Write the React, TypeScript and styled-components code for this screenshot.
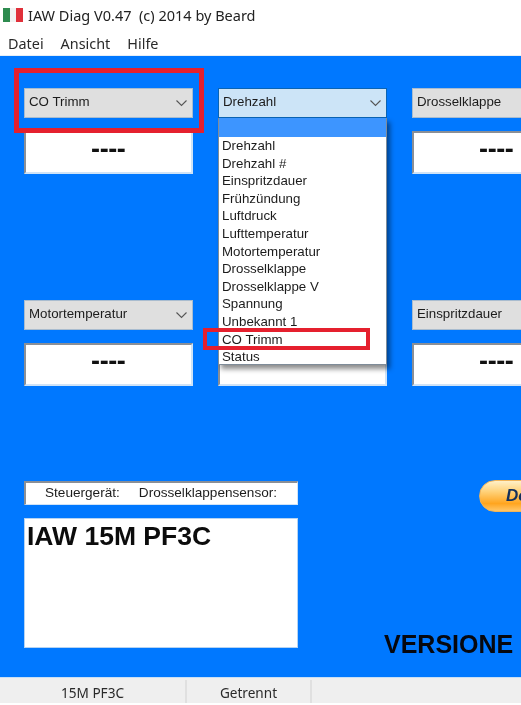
import React from "react";
import styled, { createGlobalStyle } from "styled-components";

const Global = createGlobalStyle`
  html, body { margin: 0; padding: 0; background: #fff; overflow: hidden; }
  * { box-sizing: border-box; }
`;

const Win = styled.div`
  width: 521px;
  height: 705px;
  display: flex;
  flex-direction: column;
  overflow: hidden;
  background: #fff;
  font-family: "Liberation Sans", Arial, sans-serif;
  color: #1c1c1c;
  filter: blur(0.35px);
`;

const TitleBar = styled.div`
  height: 30px;
  display: flex;
  align-items: center;
  gap: 5px;
  padding: 0 0 1px 3px;
  font-family: "Noto Sans", sans-serif;
  font-size: 14.5px;
  color: #222;
  white-space: pre;
`;

const MenuBar = styled.div`
  height: 26px;
  display: flex;
  align-items: center;
  gap: 17px;
  padding: 1px 0 0 8px;
  font-family: "Noto Sans", sans-serif;
  font-size: 14.4px;
  color: #2a2a2a;
  border-bottom: 1px solid #e6eef6;
`;

const Main = styled.div`
  position: relative;
  height: 621px;
  background: #0078ff;
  padding: 32px 0 0 24px;
  overflow: hidden;
`;

const Gauges = styled.div`
  display: grid;
  grid-template-columns: 194px 194px 168px;
  row-gap: 126px;
  width: 600px;
`;

const Gauge = styled.div`
  display: flex;
  flex-direction: column;
  gap: 13px;
  width: 168.5px;
`;

const Combo = styled.div<{ $active?: boolean }>`
  height: 30px;
  display: flex;
  align-items: center;
  justify-content: space-between;
  padding: 0 5px 4px 4px;
  font-size: 13.3px;
  background: ${p => (p.$active ? "#cce4f7" : "#dfdfdf")};
  border: 1px solid ${p => (p.$active ? "#0a64b4" : "#a9bccf")};
  white-space: nowrap;
`;

const Chevron = styled.svg`
  width: 11px;
  height: 7px;
  margin-top: 5px;
  flex: none;
`;

const Display = styled.div`
  height: 43px;
  display: flex;
  align-items: center;
  justify-content: center;
  padding-bottom: 6px;
  background: #fff;
  border-top: 2px solid #8a8f96;
  border-left: 2px solid #8a8f96;
  border-right: 2px solid #cfe3f7;
  border-bottom: 2px solid #cfe3f7;
  font-size: 27px;
  font-weight: 700;
  letter-spacing: -0.4px;
  line-height: 1;
  color: #111;
`;

const Dropdown = styled.div`
  position: absolute;
  left: 218px;
  top: 62px;
  width: 168.5px;
  height: 247px;
  background: #fff;
  border: 1px solid #7f8c99;
  border-top: none;
  box-shadow: 3px 4px 5px rgba(0, 0, 0, 0.45);
  font-size: 13.3px;
`;

const Highlight = styled.div`
  height: 19px;
  background: #3d95ff;
`;

const Item = styled.div`
  height: 17.6px;
  line-height: 17.6px;
  padding-left: 3px;
  white-space: nowrap;
`;

const RedBox = styled.div<{ $l: number; $t: number; $w: number; $h: number; $b: number }>`
  position: absolute;
  left: ${p => p.$l}px;
  top: ${p => p.$t}px;
  width: ${p => p.$w}px;
  height: ${p => p.$h}px;
  border: ${p => p.$b}px solid #e5202e;
`;

const Lower = styled.div`
  display: flex;
  margin-top: 95px;
`;

const LeftCol = styled.div`
  width: 274px;
  display: flex;
  flex-direction: column;
  gap: 13px;
  flex: none;
`;

const InfoBar = styled.div`
  height: 24px;
  display: flex;
  align-items: center;
  gap: 19px;
  padding: 0 0 2px 19px;
  background: #fff;
  border-top: 2px solid #8a8f96;
  border-left: 2px solid #8a8f96;
  border-right: 1px solid #cfe3f7;
  border-bottom: 1px solid #cfe3f7;
  font-size: 13.6px;
  white-space: nowrap;
`;

const EcuBox = styled.div`
  height: 130px;
  padding: 2px 0 0 2px;
  background: #fff;
  border: 1px solid #b5d3f2;
  font-size: 26.5px;
  line-height: 30px;
  font-weight: 700;
  color: #0c0c0c;
`;

const RightCol = styled.div`
  display: flex;
  flex-direction: column;
  align-items: flex-start;
`;

const Donate = styled.div`
  width: 120px;
  height: 32px;
  margin: -1px 0 0 181px;
  padding: 0 0 1px 26px;
  display: flex;
  align-items: center;
  flex: none;
  border-radius: 16px;
  border: 1px solid #f0b45a;
  background: linear-gradient(#fff0c8 0%, #ffd27a 35%, #ffa51f 75%, #ffc668 100%);
  font-size: 17px;
  font-weight: 700;
  font-style: italic;
  color: #12305c;
`;

const Version = styled.div`
  margin: 118px 0 0 86px;
  font-size: 25px;
  line-height: 28px;
  font-weight: 700;
  color: #06080f;
  white-space: nowrap;
`;

const StatusBar = styled.div`
  height: 26px;
  display: flex;
  background: #efefef;
  border-top: 1px solid #c7dff6;
  font-family: "Noto Sans", sans-serif;
  font-size: 13.6px;
  color: #2a2a2a;
`;

const StatusCell = styled.div<{ $w: number }>`
  width: ${p => p.$w}px;
  display: flex;
  align-items: center;
  justify-content: center;
  border-right: 2px solid #e0e0e0;
  margin-top: 2px;
  padding-top: 1px;
`;

const BottomGap = styled.div`
  flex: 1;
  background: #fff;
`;

const items = [
  "Drehzahl",
  "Drehzahl #",
  "Einspritzdauer",
  "Frühzündung",
  "Luftdruck",
  "Lufttemperatur",
  "Motortemperatur",
  "Drosselklappe",
  "Drosselklappe V",
  "Spannung",
  "Unbekannt 1",
  "CO Trimm",
  "Status",
];

const gauges = [
  { label: "CO Trimm" },
  { label: "Drehzahl", active: true },
  { label: "Drosselklappe" },
  { label: "Motortemperatur" },
  { label: "" },
  { label: "Einspritzdauer" },
];

const Flag = () => (
  <svg width="20" height="14" viewBox="0 0 20 14" style={{ flex: "none" }}>
    <rect width="7" height="14" fill="#2e8b4f" />
    <rect x="7" width="6" height="14" fill="#f2f2f2" />
    <rect x="13" width="7" height="14" fill="#e0303a" />
  </svg>
);

export default function App() {
  return (
    <Win>
      <Global />
      <TitleBar>
        <Flag />
        <span>IAW Diag V0.47  (c) 2014 by Beard</span>
      </TitleBar>
      <MenuBar>
        <span>Datei</span>
        <span>Ansicht</span>
        <span>Hilfe</span>
      </MenuBar>
      <Main>
        <Gauges>
          {gauges.map((g, i) => (
            <Gauge key={i}>
              <Combo $active={g.active}>
                <span>{g.label}</span>
                <Chevron viewBox="0 0 11 7">
                  <polyline points="0.5,0.5 5.5,5.5 10.5,0.5" fill="none" stroke="#555" strokeWidth="1.1" />
                </Chevron>
              </Combo>
              <Display>----</Display>
            </Gauge>
          ))}
        </Gauges>
        <Lower>
          <LeftCol>
            <InfoBar>
              <span>Steuergerät:</span>
              <span>Drosselklappensensor:</span>
            </InfoBar>
            <EcuBox>IAW 15M PF3C</EcuBox>
          </LeftCol>
          <RightCol>
            <Donate>Donate</Donate>
            <Version>VERSIONE</Version>
          </RightCol>
        </Lower>
        <Dropdown>
          <Highlight />
          {items.map(t => (
            <Item key={t}>{t}</Item>
          ))}
        </Dropdown>
        <RedBox $l={14} $t={12} $w={190} $h={65} $b={5} />
        <RedBox $l={203} $t={272} $w={167} $h={22} $b={4} />
      </Main>
      <StatusBar>
        <StatusCell $w={187}>15M PF3C</StatusCell>
        <StatusCell $w={125}>Getrennt</StatusCell>
      </StatusBar>
      <BottomGap />
    </Win>
  );
}
